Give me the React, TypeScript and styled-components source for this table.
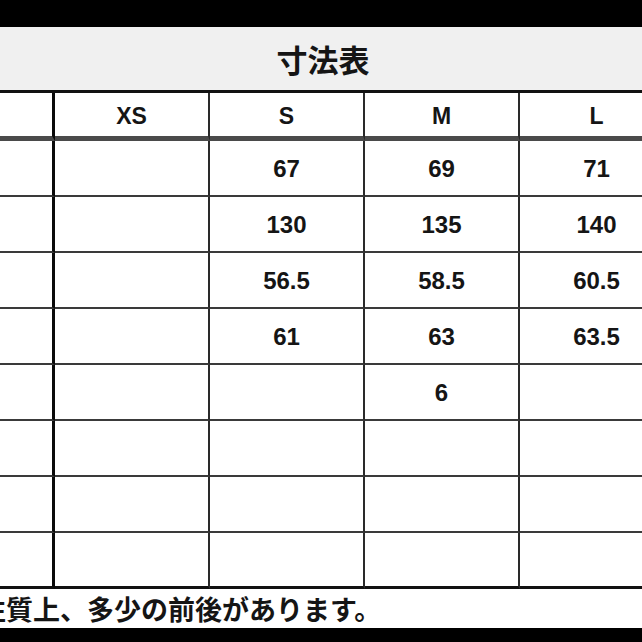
import React from "react";
import styled, { createGlobalStyle } from "styled-components";

const GlobalStyle = createGlobalStyle`
  html, body {
    margin: 0;
    padding: 0;
    background: #000;
  }
`;

const Page = styled.div`
  width: 642px;
  height: 642px;
  overflow: hidden;
  display: flex;
  flex-direction: column;
  background: #fff;
  font-family: "Liberation Sans", Arial, "Noto Sans CJK JP", sans-serif;
  color: #151515;
`;

const TopBar = styled.div`
  flex: 0 0 27px;
  background: #000;
`;

const BottomBar = styled.div`
  flex: 1 1 auto;
  background: #000;
`;

const TitleBand = styled.div`
  flex: 0 0 63px;
  display: flex;
  align-items: center;
  justify-content: center;
  background: #f0f0f0;
  border-bottom: 3px solid #111;
  font-family: "Noto Sans CJK JP", sans-serif;
  font-weight: 700;
  font-size: 31px;
  padding-left: 4px;
`;

const Grid = styled.div`
  flex: 0 0 auto;
  width: 675px;
  display: grid;
  grid-template-columns: 55px repeat(4, 155px);
`;

// heights include the borders
const Cell = styled.div<{ $head?: boolean; $first?: boolean; $last?: boolean }>`
  box-sizing: border-box;
  height: ${(p) => (p.$head ? 48 : 56)}px;
  display: flex;
  align-items: center;
  justify-content: center;
  border-right: ${(p) => (p.$first ? "3px solid #0a0a0a" : "2px solid #2a2a2a")};
  border-bottom: ${(p) =>
    p.$head ? "5px solid #4a4a4a" : p.$last ? "3px solid #111" : "2px solid #3a3a3a"};
  font-weight: 700;
  font-size: ${(p) => (p.$head ? 23 : 24)}px;
  padding-top: ${(p) => (p.$head ? 4 : 2)}px;
`;

const Note = styled.div`
  flex: 0 0 38px;
  display: flex;
  align-items: center;
  margin-left: -21px;
  font-family: "Noto Sans CJK JP", sans-serif;
  font-weight: 700;
  font-size: 27px;
  white-space: nowrap;
  background: #fff;
`;

const sizes = ["XS", "S", "M", "L"];
const rows: string[][] = [
  ["", "67", "69", "71"],
  ["", "130", "135", "140"],
  ["", "56.5", "58.5", "60.5"],
  ["", "61", "63", "63.5"],
  ["", "", "6", ""],
  ["", "", "", ""],
  ["", "", "", ""],
  ["", "", "", ""],
];

export default function App() {
  return (
    <Page>
      <GlobalStyle />
      <TopBar />
      <TitleBand>寸法表</TitleBand>
      <Grid>
        <Cell $head $first />
        {sizes.map((s) => (
          <Cell $head key={s}>
            {s}
          </Cell>
        ))}
        {rows.map((r, i) => (
          <React.Fragment key={i}>
            <Cell $first $last={i === rows.length - 1} />
            {r.map((v, j) => (
              <Cell key={j} $last={i === rows.length - 1}>
                {v}
              </Cell>
            ))}
          </React.Fragment>
        ))}
      </Grid>
      <Note>性質上、多少の前後があります。</Note>
      <BottomBar />
    </Page>
  );
}
